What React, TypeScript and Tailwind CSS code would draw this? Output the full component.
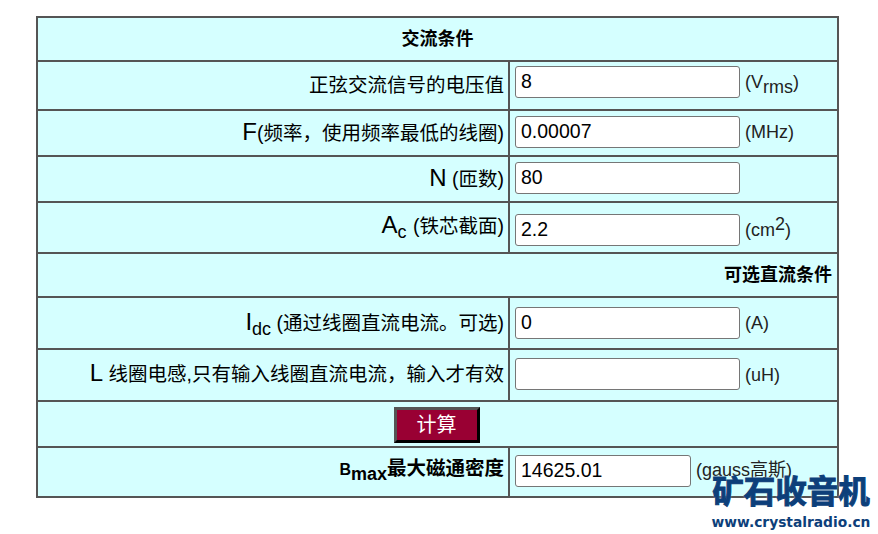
const cjk = "font-['Liberation_Sans','Noto_Sans_CJK_SC',sans-serif]"

function Field({ value, wide = true }: { value: string; wide?: boolean }) {
  return (
    <input
      readOnly
      value={value}
      className={`${wide ? 'w-[225px]' : 'w-[176px]'} h-[32px] shrink-0 bg-white border border-[#767676] rounded-[3px] px-[5px] pb-[2px] text-[19.5px] text-black outline-none`}
    />
  )
}

function Row({ rowClass, padClass, label, children }: { rowClass: string; padClass: string; label: React.ReactNode; children: React.ReactNode }) {
  return (
    <div className={`flex border-b-2 border-[#555] ${rowClass}`}>
      <div className="w-[470px] shrink-0 flex items-center justify-end pr-[4px] text-[19.5px] text-black whitespace-nowrap">{label}</div>
      <div className={`flex-1 flex border-l-2 border-[#555] pl-[5px] gap-[5px] ${padClass}`}>{children}</div>
    </div>
  )
}

function Unit({ children, className = '' }: { children: React.ReactNode; className?: string }) {
  return <span className={`text-[18px] text-[#222] whitespace-nowrap ${className}`}>{children}</span>
}

export default function App() {
  return (
    <div className={`relative w-[878px] h-[534px] bg-white overflow-hidden pt-[16px] pl-[36px] ${cjk}`}>
      <div className="w-[803px] border-2 border-b-0 border-[#555] bg-[#d5ffff]">
        <div className="h-[44px] border-b-2 border-[#555] flex items-center justify-center text-[18px] font-bold text-black">交流条件</div>

        <Row rowClass="h-[49px]" padClass="pt-[4px]" label={<span className="mt-[1px]">正弦交流信号的电压值</span>}>
          <Field value="8" />
          <Unit className="mt-[3px]">(V<sub className="bottom-0 text-[18px] align-[-5px] leading-none">rms</sub>)</Unit>
        </Row>

        <Row rowClass="h-[46px]" padClass="pt-[5px]" label={<span className="-mt-[2px]"><span className="text-[24px]">F</span>(频率，使用频率最低的线圈)</span>}>
          <Field value="0.00007" />
          <Unit className="mt-[3px]">(MHz)</Unit>
        </Row>

        <Row rowClass="h-[46px]" padClass="pt-[5px]" label={<span className="-mt-[2px]"><span className="text-[24px]">N</span> (匝数)</span>}>
          <Field value="80" />
        </Row>

        <Row rowClass="h-[51px]" padClass="pt-[11px]" label={<span className="-mt-[6px]"><span className="text-[24px]">A</span><sub className="bottom-0 mr-[1px] text-[18px] align-[-5px] leading-none">c</sub> (铁芯截面)</span>}>
          <Field value="2.2" />
          <Unit className="mt-[1px]">(cm<sup className="top-0 text-[18px] align-[6px] leading-none">2</sup>)</Unit>
        </Row>

        <div className="h-[44px] border-b-2 border-[#555] flex items-center justify-end pr-[5px] text-[18px] font-bold text-black">可选直流条件</div>

        <Row rowClass="h-[52px]" padClass="pt-[9px]" label={<span className="-mt-[2px]"><span className="text-[24px]">I</span><sub className="bottom-0 text-[18px] align-[-5px] leading-none">dc</sub> (通过线圈直流电流。可选)</span>}>
          <Field value="0" />
          <Unit className="mt-[3px]">(A)</Unit>
        </Row>

        <Row rowClass="h-[52px]" padClass="pt-[8px]" label={<span className="-mt-[4px]"><span className="text-[24px]">L</span> 线圈电感,只有输入线圈直流电流，输入才有效</span>}>
          <Field value="" />
          <Unit className="mt-[4px]">(uH)</Unit>
        </Row>

        <div className="h-[46px] border-b-2 border-[#555] flex items-start justify-center pt-[5px] pr-[2px]">
          <button className="w-[86px] h-[36px] bg-[#990033] border-[3px] border-t-[#555] border-l-[#555] border-b-black border-r-black text-white text-[20px] leading-none">计算</button>
        </div>

        <Row rowClass="h-[50px]" padClass="pt-[7px]" label={<span className="font-bold -mt-[6px]"><span className="text-[16px]">B</span><sub className="bottom-0 text-[18px] align-[-5px] leading-none">max</sub>最大磁通密度</span>}>
          <Field value="14625.01" wide={false} />
          <Unit className="mt-[2px]">(gauss高斯)</Unit>
        </Row>
      </div>

      <div className="absolute left-[711px] top-[473px] w-[160px] flex flex-col items-center">
        <div className="text-[31.5px] leading-[38px] font-bold text-[#0d3f7a] whitespace-nowrap [-webkit-text-stroke:1px_#0d3f7a] [text-shadow:0_0_2px_#fff]">矿石收音机</div>
        <div className="mt-[2px] text-[13.8px] leading-[18px] font-bold text-[#0d3f7a] whitespace-nowrap font-['DejaVu_Sans',sans-serif]">www.crystalradio.cn</div>
      </div>
    </div>
  )
}
